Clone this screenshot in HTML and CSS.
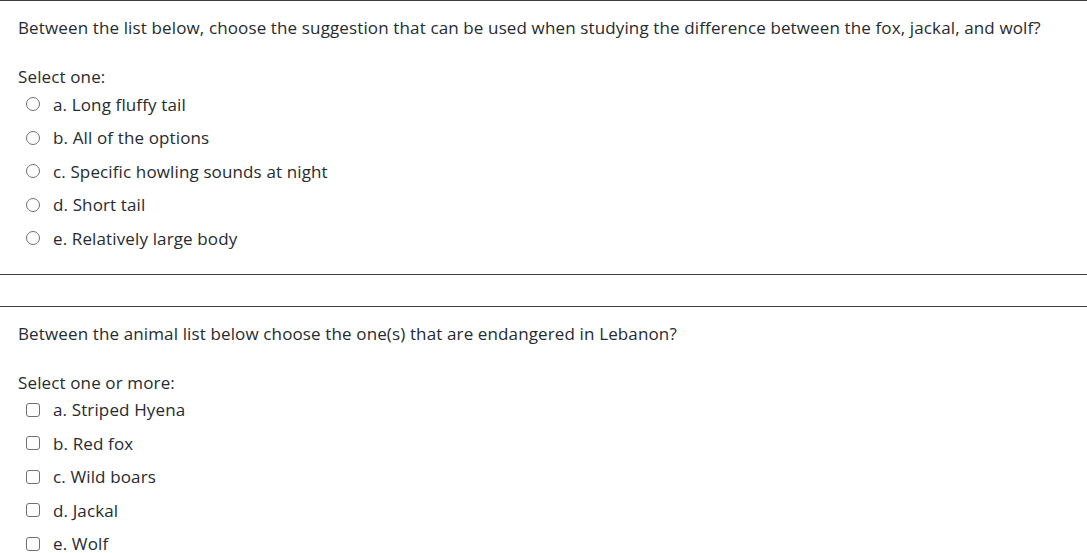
FILE: index.html
```html
<!DOCTYPE html>
<html lang="en">
<head>
<meta charset="utf-8">
<title>Quiz</title>
<link rel="stylesheet" href="styles.css">
</head>
<body>
<div class="que">
  <div class="qtext">Between the list below, choose the suggestion that can be used when studying the difference between the fox, jackal, and wolf?</div>
  <div class="prompt">Select one:</div>
  <div class="answer">
    <div class="opt"><span class="radio"></span><span class="label">a. Long fluffy tail</span></div>
    <div class="opt"><span class="radio"></span><span class="label">b. All of the options</span></div>
    <div class="opt"><span class="radio"></span><span class="label">c. Specific howling sounds at night</span></div>
    <div class="opt"><span class="radio"></span><span class="label">d. Short tail</span></div>
    <div class="opt"><span class="radio"></span><span class="label">e. Relatively large body</span></div>
  </div>
</div>
<div class="que">
  <div class="qtext">Between the animal list below choose the one(s) that are endangered in Lebanon?</div>
  <div class="prompt">Select one or more:</div>
  <div class="answer">
    <div class="opt"><span class="check"></span><span class="label">a. Striped Hyena</span></div>
    <div class="opt"><span class="check"></span><span class="label">b. Red fox</span></div>
    <div class="opt"><span class="check"></span><span class="label">c. Wild boars</span></div>
    <div class="opt"><span class="check"></span><span class="label">d. Jackal</span></div>
    <div class="opt"><span class="check"></span><span class="label">e. Wolf</span></div>
  </div>
</div>
</body>
</html>
```

FILE: styles.css
```css
html, body {
  margin: 0;
  padding: 0;
  background: #ffffff;
}
body {
  font-family: "Open Sans", "Liberation Sans", sans-serif;
  font-size: 17px;
  letter-spacing: 0.13px;
  line-height: 24px;
  color: #262b30;
  overflow: hidden;
}
.que {
  border-top: 1px solid #3a3f44;
  border-bottom: 1px solid #3a3f44;
  padding: 15px 18px 18px 18px;
  margin-bottom: 31px;
}
.qtext {
  margin: 0;
}
.prompt {
  margin-top: 25px;
}
.answer {
  display: flex;
  flex-direction: column;
  margin-top: -1px;
}
.opt {
  display: flex;
  align-items: center;
  height: 33.5px;
  padding-left: 8px;
}
.radio, .check {
  width: 14px;
  height: 14px;
  box-sizing: border-box;
  border: 1.3px solid #707070;
  flex: none;
  margin-right: 13px;
  margin-top: -1px;
}
.radio {
  border-radius: 50%;
}
.check {
  border-radius: 3px;
}
.label {
  white-space: nowrap;
}
```
